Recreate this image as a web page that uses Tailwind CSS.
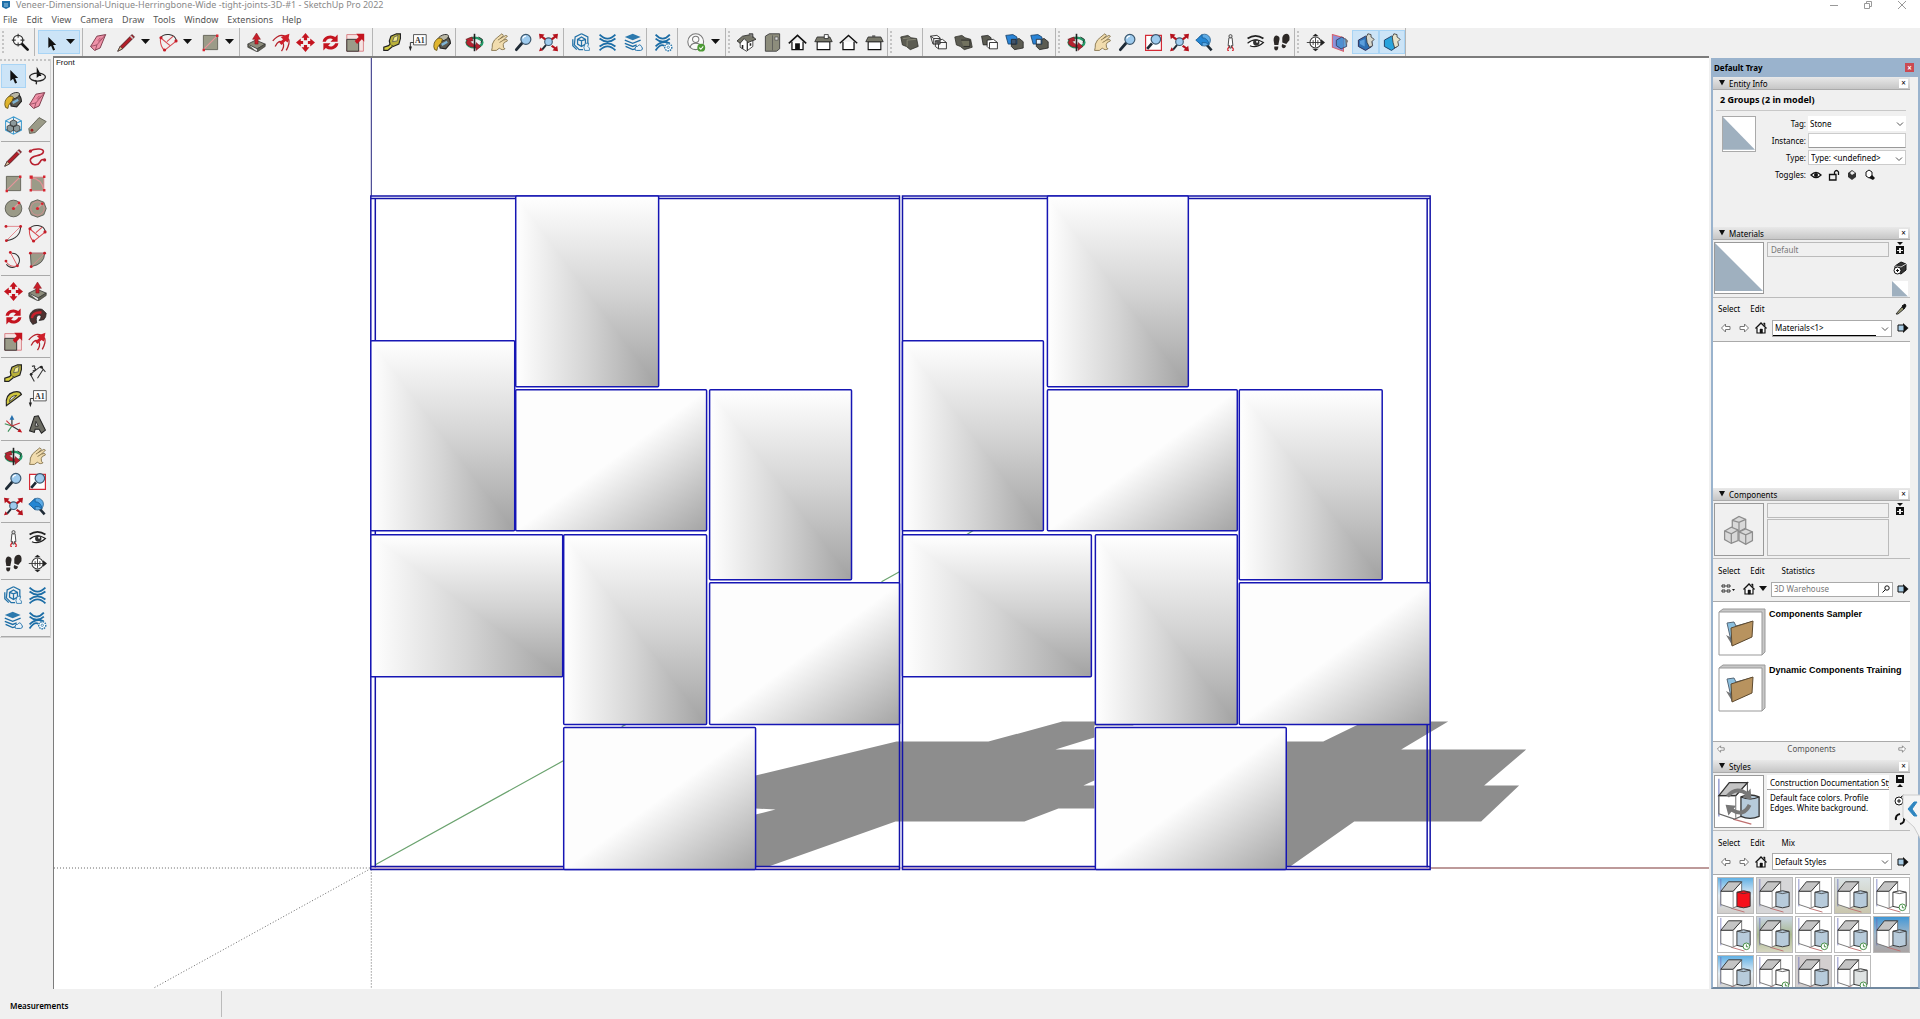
<!DOCTYPE html>
<html lang="en">
<head>
    <meta charset="UTF-8">
    <meta name="viewport" content="width=device-width, initial-scale=1.0">
    <title>Veneer-Dimensional-Unique-Herringbone-Wide - SketchUp Pro 2022</title>
    <script src="https://cdn.jsdelivr.net/npm/@tailwindcss/browser@4"></script>
</head>
<body class="h-screen flex flex-col overflow-hidden bg-[#f0f0f0] font-['Noto_Sans',sans-serif] text-[9px] leading-3 text-black">

<!-- Face shading -->
<svg class="absolute h-0 w-0" xmlns="http://www.w3.org/2000/svg">
    <linearGradient id="gv" x1="0" y1="0" x2="0" y2="1"><stop offset="0" stop-color="#fff"/><stop offset="0.5" stop-color="#d4d4d4"/><stop offset="1" stop-color="#a2a2a2"/></linearGradient>
    <linearGradient id="gh" x1="0" y1="0" x2="1" y2="0"><stop offset="0" stop-color="#fff"/><stop offset="0.5" stop-color="#d4d4d4"/><stop offset="1" stop-color="#a2a2a2"/></linearGradient>
    <linearGradient id="gd" x1="0.5" y1="0.5" x2="1" y2="1"><stop offset="0" stop-color="#fdfdfd"/><stop offset="1" stop-color="#a4a4a4"/></linearGradient>
    <symbol id="face-a" viewBox="0 0 100 100" preserveAspectRatio="none"><path d="M0 0H100V100H0z" fill="url(#gv)"/><path d="M0 0L100 100H0z" fill="url(#gh)"/></symbol>
    <symbol id="face-b" viewBox="0 0 100 100" preserveAspectRatio="none"><path d="M0 0H100V100H0z" fill="url(#gd)"/></symbol>
</svg>

<!-- Icon sprite -->
<svg class="hidden" xmlns="http://www.w3.org/2000/svg">
    <symbol id="zoom" viewBox="0 0 24 24"><path d="M13 13L21 21" stroke="#151515" stroke-width="3.4" stroke-linecap="round"/><circle cx="9" cy="9" r="6" fill="#f8f8f8" stroke="#333" stroke-width="1.6"/><path d="M9 1v5M9 12v5M1 9h5M12 9h5" stroke="#333" stroke-width="1.3"/></symbol>
    <symbol id="select" viewBox="0 0 24 24"><path d="M8 5V19L11.500 16L14 22L16.500 21L14 15H18z" fill="#111"/></symbol>
    <symbol id="lasso" viewBox="0 0 24 24"><path d="M11 1V15L14 12.500H17z" fill="#111"/><ellipse cx="12" cy="14" rx="10" ry="5" fill="none" stroke="#222" stroke-width="1.6"/><path d="M9 18q3 3 1 5" fill="none" stroke="#222" stroke-width="1.5"/></symbol>
    <symbol id="eraser" viewBox="0 0 24 24"><path d="M2 17L10 4L21 2L14 19L7 22z" fill="#ef92a8" stroke="#7b3a4a" stroke-width="1.2"/><path d="M2 17L10 15L21 2M10 15L8 22" fill="none" stroke="#8d4558"/><path d="M11 10l3-4M12 11l4-5" stroke="#b85470"/></symbol>
    <symbol id="pencil" viewBox="0 0 24 24"><path d="M1 23L4 17L19 2L22 5L7 20z" fill="#b21e28" stroke="#3a1215"/><path d="M1 23L4 17L7 20z" fill="#e8c79a" stroke="#333" stroke-width=".8"/><path d="M17 4L20 7" stroke="#ccc" stroke-width="2"/></symbol>
    <symbol id="freehand" viewBox="0 0 24 24"><path d="M2 4C9 0 22 0 19 6C16 11 2 9 3 16C4 22 12 23 15 18Q17 13 22 15" fill="none" stroke="#b8202f" stroke-width="2"/><circle cx="3" cy="4" r="2" fill="#b8202f"/><circle cx="21" cy="15" r="2" fill="#b8202f"/></symbol>
    <symbol id="rect" viewBox="0 0 24 24"><path d="M3 3H21V21H3z" fill="#9b9b88" stroke="#55554a"/><path d="M3 21L21 3" stroke="#e8959b" stroke-width="1.3"/><path d="M2 20h3v3h-3zM19 2h3v3h-3z" fill="#d8242f"/></symbol>
    <symbol id="rotrect" viewBox="0 0 24 24"><path d="M4 4H20V21H4z" fill="#9b9b88" stroke="#d87a80"/><path d="M4 5Q17 6 20 20" fill="none" stroke="#e09095" stroke-width="1.500"/><path d="M2 2h4v4h-4zM19 2h3v3h-3zM2 19h3v3h-3zM19 19h3v3h-3z" fill="#d8242f"/></symbol>
    <symbol id="circle" viewBox="0 0 24 24"><circle cx="12" cy="12" r="10.500" fill="#9b9b88" stroke="#4c4c44"/><path d="M12 12L19 5" stroke="#e8959b" stroke-width="1.5"/><circle cx="12" cy="12" r="2" fill="#d8242f"/><circle cx="19" cy="5" r="1.700" fill="#d8242f"/></symbol>
    <symbol id="polygon" viewBox="0 0 24 24"><path d="M12 1L20 4L23 12L20 20L12 23L4 20L1 12L4 4z" fill="#9b9b88" stroke="#4c4c44"/><circle cx="12" cy="12" r="8.500" fill="none" stroke="#dc8a8f"/><path d="M12 12L18 6" stroke="#e8959b" stroke-width="1.5"/><circle cx="12" cy="12" r="2" fill="#d8242f"/><circle cx="18" cy="6" r="1.7" fill="#d8242f"/></symbol>
    <symbol id="arc" viewBox="0 0 24 24"><path d="M2 6C6 0 20 0 22 10" fill="none" stroke="#333" stroke-width="1.300"/><path d="M2 6C1 13 3 18 7 22L22 10M2 6L14 16M10 11L18 4" fill="none" stroke="#d8484f" stroke-width="1.3"/><circle cx="2.500" cy="6" r="2" fill="#c61d28"/><circle cx="7" cy="21.500" r="2" fill="#c61d28"/><circle cx="21.500" cy="10" r="2" fill="#c61d28"/></symbol>
    <symbol id="arc2" viewBox="0 0 24 24"><path d="M2 3H21L3 21" fill="none" stroke="#e0868b" stroke-width="1.2"/><path d="M21 3Q21 18 3 21" fill="none" stroke="#333" stroke-width="1.3"/><circle cx="2.5" cy="3" r="1.8" fill="#c61d28"/><circle cx="21" cy="3" r="1.8" fill="#c61d28"/><circle cx="3" cy="21" r="1.8" fill="#c61d28"/></symbol>
    <symbol id="arc3" viewBox="0 0 24 24"><path d="M10 4A9 9 0 1 1 3 18" fill="none" stroke="#333" stroke-width="1.3"/><path d="M8 3L17 20M17 20Q8 23 2 14" fill="none" stroke="#d8585f" stroke-width="1.2"/><circle cx="8" cy="3" r="1.8" fill="#c61d28"/><circle cx="2.500" cy="14" r="1.8" fill="#c61d28"/><circle cx="17" cy="20" r="1.8" fill="#c61d28"/></symbol>
    <symbol id="pie" viewBox="0 0 24 24"><path d="M3 4H21Q21 18 4 21z" fill="#9b9b88" stroke="#444"/><path d="M3 4H21L4 21" fill="none" stroke="#e08a8f"/><circle cx="3" cy="4" r="1.8" fill="#c61d28"/><circle cx="21" cy="4" r="1.8" fill="#c61d28"/><circle cx="4" cy="21" r="1.8" fill="#c61d28"/></symbol>
    <symbol id="pushpull" viewBox="0 0 24 24"><path d="M1 14L11 9L23 14L13 20z" fill="#8d8d7c" stroke="#333"/><path d="M1 14V18L13 24V20L23 14V17L13 24" fill="#5f5f52" stroke="#333" stroke-width=".8"/><path d="M12 0L17 8H14V14H10V8H7z" fill="#c9202b" stroke="#7a0f16" stroke-width=".6"/></symbol>
    <symbol id="offset" viewBox="0 0 24 24"><path d="M1 10Q12-3 21 8Q23 13 18 22" fill="none" stroke="#b52029" stroke-width="1.700"/><path d="M4 17Q9 7 14 13Q16 17 12 23" fill="none" stroke="#b52029" stroke-width="1.600"/><path d="M22 1L20 12L17 10L12 15L9 12L14 8L11 5z" fill="#cf1f2a"/></symbol>
    <symbol id="move" viewBox="0 0 24 24"><path d="M12 0L17 6H14V9H10V6H7zM12 24L17 18H14V15H10V18H7zM0 12L6 7V10H9V14H6V17zM24 12L18 7V10H15V14H18V17z" fill="#c4141f"/></symbol>
    <symbol id="rotate" viewBox="0 0 24 24"><path d="M2 11A10 9 0 0 1 18 5L21 2V11H12L15 8A6 6 0 0 0 6 11z" fill="#c4141f"/><path d="M22 13A10 9 0 0 1 6 19L3 22V13H12L9 16A6 6 0 0 0 18 13z" fill="#c4141f"/></symbol>
    <symbol id="scale" viewBox="0 0 24 24"><path d="M1 2H22V23H1z" fill="#f6e3e2" stroke="#d36a70"/><path d="M1 8H16V23H1z" fill="#9b9b88" stroke="#333" stroke-width="1.2"/><path d="M23 1V11L20 8L14 14L11 10L16 5L13 1z" fill="#c4141f"/></symbol>
    <symbol id="followme" viewBox="0 0 24 24"><path d="M2 13C2 5 10 1 18 3L23 8Q23 13 20 16L14 17Q19 11 14 10Q9 11 11 20L6 22Q2 18 2 13z" fill="#4d3331" stroke="#222"/><path d="M5 14Q6 6 17 7" fill="none" stroke="#c9202b" stroke-width="3"/></symbol>
    <symbol id="tape" viewBox="0 0 24 24"><path d="M8 10L10 4L17 1H22V7L20 14L13 17L9 15z" fill="#b9b13a" stroke="#222" stroke-width="1.500"/><path d="M12 11L14 5L19 3L18 10z" fill="#f1eb8e" stroke="#555"/><path d="M9 14L7 16L1 18V22H6L12 17" fill="#d7cf40" stroke="#222" stroke-width="1.500"/></symbol>
    <symbol id="dimension" viewBox="0 0 24 24"><path d="M3 13L16 3M16 3L22 10M3 13L8 22M19 7L12 18" fill="none" stroke="#333" stroke-width="1.300"/><path d="M5 3q5-2 3 2q4 2-2 4" fill="none" stroke="#333" stroke-width="1.400"/><circle cx="17" cy="4" r="1.700" fill="#222"/><circle cx="4" cy="13" r="1.700" fill="#222"/></symbol>
    <symbol id="protractor" viewBox="0 0 24 24"><path d="M3 21Q1 7 12 4Q20 2 22 7z" fill="#cfc640" stroke="#222" stroke-width="1.500"/><path d="M7 16Q7 9 16 8z" fill="#eee" stroke="#222"/></symbol>
    <symbol id="text" viewBox="0 0 24 24"><path d="M7 2H23V15H7z" fill="#fff" stroke="#333"/><path d="M7 12H3V18" fill="none" stroke="#333" stroke-width="1.200"/><path d="M1 17H5L3 23z" fill="#222"/><text x="15" y="12" font-size="10" font-weight="700" font-family="Liberation Serif, serif" text-anchor="middle" fill="#333">A1</text></symbol>
    <symbol id="axes" viewBox="0 0 24 24"><path d="M10 14V3M10 14L20 20" stroke="#333" stroke-width="1.500"/><path d="M10 0L13 6H7z" fill="#246fae"/><path d="M1 11L10 14L5 21" fill="none" stroke="#3b8e58" stroke-width="1.400"/><path d="M10 14L20 10M3 7L10 14" fill="none" stroke="#c8323a" stroke-width="1.400"/><path d="M23 22L17 21L20 17z" fill="#c4141f"/></symbol>
    <symbol id="text3d" viewBox="0 0 24 24"><path d="M8 2L13 1L22 19L17 23L14 18H9L8 22L2 20z" fill="#6d6d64" stroke="#222" stroke-width="1.300"/><path d="M10 8L13 14H9z" fill="#ddd" stroke="#222"/></symbol>
    <symbol id="paint" viewBox="0 0 24 24"><path d="M7 8L16 3Q22 6 22 13L16 20L9 19z" fill="#5d5b52" stroke="#222" stroke-width="1.500"/><ellipse cx="13" cy="6" rx="7" ry="3.500" transform="rotate(-22 13 6)" fill="#b9b7a6" stroke="#222"/><path d="M3 10Q7 4 12 8Q11 13 8 15Q5 18 5 22Q1 22 1 17Q1 12 3 10z" fill="#dfb52e" stroke="#5b4a12"/><path d="M11 15L18 11" stroke="#7fb5d5" stroke-width="3"/></symbol>
    <symbol id="make" viewBox="0 0 24 24"><path d="M12 1L22 6V18L12 23L2 18V6zM2 6L12 11L22 6M12 11V23M2 18L12 12L22 18M12 1V11" fill="none" stroke="#3f9bcf" stroke-width="1.300"/><path d="M8 7l4-2 4 2v5l-4 2-4-2zM4 13l4-2 4 2v5l-4 2-4-2zM12 13l4-2 4 2v5l-4 2-4-2z" fill="#8d9a9c" stroke="#333"/></symbol>
    <symbol id="tag" viewBox="0 0 24 24"><path d="M2 22L1 16L14 2L23 7L9 21z" fill="#9b9b88" stroke="#55554a"/><circle cx="5" cy="18" r="1.800" fill="#922"/></symbol>
    <symbol id="orbit" viewBox="0 0 24 24"><ellipse cx="12" cy="12" rx="10" ry="6" fill="none" stroke="#249a68" stroke-width="3"/><path d="M12 18A10 6 0 0 1 3 9L1 8L9 5L10 10L7 10Q8 14 14 15V12L20 17L14 22V18z" fill="#b42330" stroke="#6a1119" stroke-width=".6"/><path d="M12 1V23" stroke="#222" stroke-width="2"/><path d="M17 5L22 8L20 13" fill="none" stroke="#222"/></symbol>
    <symbol id="pan" viewBox="0 0 24 24"><path d="M2 22Q3 19 3 14Q5 8 10 5L15 1L17 3L13 7L20 3L22 4L17 9L21 8L22 10L18 12Q16 14 17 18L19 20L16 21Q13 21 12 19L8 22z" fill="#f1dcae" stroke="#75633a" stroke-width="1"/><path d="M10 9L13 7M12 12L17 9" stroke="#75633a"/></symbol>
    <symbol id="lens" viewBox="0 0 24 24"><path d="M10 13L3 21" stroke="#1f2b36" stroke-width="3.600" stroke-linecap="round"/><circle cx="15" cy="8" r="6.300" fill="#9ecbee" stroke="#3d586e" stroke-width="1.500"/><path d="M11 7Q12 4 15 4" stroke="#fff" stroke-width="1.500" fill="none"/></symbol>
    <symbol id="zoomwin" viewBox="0 0 24 24"><path d="M2 3H22V22H2z" fill="#fff" stroke="#d32a35" stroke-width="1.500"/><path d="M10 13L4 20" stroke="#1f2b36" stroke-width="3.400"/><circle cx="15" cy="8" r="6" fill="#9ecbee" stroke="#3d586e" stroke-width="1.500"/></symbol>
    <symbol id="zoomext" viewBox="0 0 24 24"><path d="M9 15L4 21" stroke="#1f2b36" stroke-width="2.500"/><circle cx="12" cy="11" r="4.800" fill="#9ecbee" stroke="#3d586e" stroke-width="1.400"/><path d="M0 1L7 2L5 4L9 7L7 9L3 6L1 8zM24 1L17 2L19 4L15 7L17 9L21 6L23 8zM24 23L17 22L19 20L15 17L17 15L21 18L23 16zM0 23L5 22L2 18z" fill="#b5121d"/></symbol>
    <symbol id="previous" viewBox="0 0 24 24"><path d="M14 14L21 22" stroke="#1f2b36" stroke-width="3.200"/><circle cx="12" cy="9" r="7.500" fill="#5cabe6" stroke="#28608e"/><path d="M1 9L9 2V6Q16 6 18 15Q14 11 9 12V16z" fill="#2486d3" stroke="#175a92"/></symbol>
    <symbol id="camera" viewBox="0 0 24 24"><path d="M8 21L12 14L16 21" fill="none" stroke="#d8242f" stroke-width="1.500"/><path d="M8 22h2M14 22h2" stroke="#d8242f" stroke-width="1.500"/><path d="M10 6H14L15 16H13V19H11V16H9z" fill="#fff" stroke="#333" stroke-width="1.100"/><circle cx="12" cy="4" r="2" fill="#ddd" stroke="#333"/></symbol>
    <symbol id="look" viewBox="0 0 24 24"><path d="M2 7Q12 0 22 7" fill="none" stroke="#222" stroke-width="2.200"/><path d="M2 13Q11 5 22 12Q13 20 5 16" fill="#fff" stroke="#222" stroke-width="1.500"/><circle cx="13" cy="12" r="4" fill="#333"/><circle cx="14" cy="11" r="1.200" fill="#fff"/></symbol>
    <symbol id="walk" viewBox="0 0 24 24"><path d="M2 9Q2 3 6 3Q11 4 9 10L8 15H3zM3 17H8Q8 22 5 22Q2 21 3 17zM13 6Q14 1 19 1Q23 2 22 9L18 14L13 12zM13 14L18 16Q16 20 14 19Q11 18 13 14z" fill="#2c2826"/></symbol>
    <symbol id="section" viewBox="0 0 24 24"><circle cx="12" cy="12" r="7" fill="#fff" stroke="#333" stroke-width="1.300"/><path d="M1 12H20M12 6V18M9 9V15M15 9V15" stroke="#333" stroke-width="1.100"/><path d="M19 8L24 12L19 16zM8 4L12 1L16 4zM8 20L12 23L16 20z" fill="#222"/></symbol>
    <symbol id="wh" viewBox="0 0 24 24"><path d="M12 1L20 5V15M12 1L4 5L3 15L9 21L14 21M12 5L17 8V14L12 17L7 14V8zM7 8L12 10L17 8M12 10V17M1 8V16L6 21" fill="none" stroke="#2272a8" stroke-width="1.600"/><path d="M17 13H21L20 17L22 19V22H16L15 18z" fill="#e7f2f9" stroke="#2272a8"/></symbol>
    <symbol id="ext" viewBox="0 0 24 24"><path d="M2 2Q12 12 22 2M2 7Q12 15 22 7M2 22Q12 12 22 22M2 17Q12 9 22 17" fill="none" stroke="#1c6da6" stroke-width="2.200"/></symbol>
    <symbol id="layers" viewBox="0 0 24 24"><path d="M11 1L21 5L11 9L1 5z" fill="#2c79ad"/><path d="M1 9L11 13L21 9M1 13L11 17L16 15M2 17L11 21L14 20" fill="none" stroke="#1c6da6" stroke-width="1.700"/><path d="M14 20Q14 16 17 17Q20 13 22 17Q25 21 21 22H16Q13 22 14 20z" fill="#eaf3fa" stroke="#1c6da6" stroke-width="1.200"/></symbol>
    <symbol id="extgear" viewBox="0 0 24 24"><path d="M2 2Q11 12 20 2M2 7Q11 15 20 7M2 22Q8 13 13 16M2 17Q10 9 20 13" fill="none" stroke="#1c6da6" stroke-width="2.200"/><circle cx="18" cy="18" r="4.500" fill="#fff" stroke="#2c79ad" stroke-width="1.800" stroke-dasharray="2 1"/><circle cx="18" cy="18" r="1.500" fill="none" stroke="#2c79ad"/></symbol>
    <symbol id="account" viewBox="0 0 24 24"><circle cx="11" cy="11" r="10" fill="#fafafa" stroke="#777" stroke-width="1.300"/><circle cx="11" cy="8" r="4" fill="none" stroke="#777" stroke-width="1.300"/><path d="M4 18Q5 13 11 13Q17 13 18 18" fill="none" stroke="#777" stroke-width="1.300"/><circle cx="18" cy="18.500" r="5" fill="#4d9a35"/><path d="M15.500 18.500L17.500 20.500L20.500 17" fill="none" stroke="#fff" stroke-width="1.300"/></symbol>
    <symbol id="iso" viewBox="0 0 24 24"><path d="M4 11V18L12 23L20 17V9" fill="#fff" stroke="#222"/><path d="M0 10L7 4L17 2L24 8L14 12L9 7L4 13z" fill="#77776a" stroke="#222"/><path d="M13 11V22" stroke="#222" stroke-width="1.500"/><path d="M7 15v5M17 13v3" stroke="#222" stroke-width="2"/><path d="M15 1H20V6" fill="#888" stroke="#222"/></symbol>
    <symbol id="vtop" viewBox="0 0 24 24"><path d="M3 4L8 1H21V20L17 23H3z" fill="#8d8d7c" stroke="#444" stroke-width="1.200"/><path d="M12 3V22" stroke="#555"/><path d="M15 5H19V9H15z" fill="#ddd" stroke="#555"/></symbol>
    <symbol id="vfront" viewBox="0 0 24 24"><path d="M5 11V21H19V11" fill="#fff" stroke="#111" stroke-width="1.600"/><path d="M1 13L12 3L23 13" fill="none" stroke="#111" stroke-width="2"/><path d="M9 13H15V21H9z" fill="#111"/></symbol>
    <symbol id="vright" viewBox="0 0 24 24"><path d="M4 11H20V21H4z" fill="#fff" stroke="#111" stroke-width="1.400"/><path d="M1 11L4 5H20L23 11z" fill="#77776a" stroke="#222"/><path d="M13 2H18V7H13z" fill="#fff" stroke="#222"/></symbol>
    <symbol id="vback" viewBox="0 0 24 24"><path d="M5 11V21H19V11" fill="#fff" stroke="#111" stroke-width="1.600"/><path d="M1 13L12 3L23 13" fill="none" stroke="#111" stroke-width="1.800"/></symbol>
    <symbol id="vleft" viewBox="0 0 24 24"><path d="M4 11H20V21H4z" fill="#fff" stroke="#111" stroke-width="1.400"/><path d="M1 11L4 5H20L23 11z" fill="#77776a" stroke="#222"/><path d="M9 3H13V5H9z" fill="#555"/></symbol>
    <symbol id="solid" viewBox="0 0 24 24"><path d="M1 5L10 3L14 6L21 7L23 17L13 21L8 17L3 15z" fill="#5c5c52" stroke="#33332c"/><path d="M9 9L20 8M9 9V17M4 7L13 6" stroke="#92927f" fill="none"/></symbol>
    <symbol id="solidx" viewBox="0 0 24 24"><path d="M2 4L10 3L14 6V14H5zM8 10L17 8L22 12V20H12L8 17zM2 4L6 7H14M6 7V14M8 10L12 12H22M12 12V20" fill="#fff" fill-opacity=".6" stroke="#222" stroke-width="1.100"/><path d="M9 9H14V14H9z" fill="#555"/></symbol>
    <symbol id="solidsub" viewBox="0 0 24 24"><path d="M1 5L10 3L14 6L21 8L23 18L13 21L8 17L3 15z" fill="#5c5c52" stroke="#33332c"/><path d="M9 9H20V17H12" fill="#72725f" stroke="#222"/></symbol>
    <symbol id="solidtrim" viewBox="0 0 24 24"><path d="M2 4L10 3L14 6V15H4z" fill="#5c5c52" stroke="#222"/><path d="M9 9L17 8L22 12V20H12L9 17zM12 12H22M12 12V20" fill="#fff" stroke="#222" stroke-width="1.100"/></symbol>
    <symbol id="solidcut" viewBox="0 0 24 24"><path d="M8 9L18 7L23 11V19L12 21L8 17z" fill="#5c5c52" stroke="#222"/><path d="M1 3L10 2L15 5V14H4z" fill="#2a84d6" stroke="#123a62"/><path d="M8 8H14V14H8z" fill="#3f536b" stroke="#222"/></symbol>
    <symbol id="solidsplit" viewBox="0 0 24 24"><path d="M8 9L18 7L23 11V19L12 21L8 17z" fill="#5c5c52" stroke="#222"/><path d="M1 3L10 2L15 5V14H4z" fill="#2a84d6" stroke="#123a62"/><path d="M8 8H14V14H8z" fill="#e8f1fa" stroke="#222"/></symbol>
    <symbol id="splane" viewBox="0 0 24 24"><path d="M3 2L17 6V23L3 18z" fill="#8d93d8" stroke="#d8606c" stroke-width="1.300"/><path d="M8 9L15 5L21 9V17L14 20L8 16z" fill="#3d8fd0" fill-opacity=".8" stroke="#335"/><path d="M19 6L23 10L20 15" fill="#777"/></symbol>
    <symbol id="scut" viewBox="0 0 24 24"><path d="M3 9L12 4L20 9V17L12 22L3 17z" fill="#2e6fb2" stroke="#2b2b55" stroke-width="1.200"/><path d="M13 5L15 1L19 2V5L23 8L20 11L21 16L17 18L14 12z" fill="#d6d6cc" stroke="#333"/><path d="M5 10L11 8V17L5 14z" fill="#5b9edc"/></symbol>
    <symbol id="sfill" viewBox="0 0 24 24"><path d="M3 9L12 4L19 9V17L12 22L3 17z" fill="#28a3dc" stroke="#1d3f66" stroke-width="1.200"/><path d="M13 5L15 1L19 2V5L23 8L20 11L21 16L16 19L14 12z" fill="#e6e3cc" stroke="#333"/></symbol>

    <symbol id="swatch" viewBox="0 0 48 52" preserveAspectRatio="none"><path d="M0 0H48V52H0z" fill="#fff"/><path d="M0 0L48 50H0z" fill="#9fb0bf"/></symbol>
    <symbol id="chev" viewBox="0 0 8 8"><path d="M1 2.500L4 5.500L7 2.500" fill="none" stroke="#555"/></symbol>
    <symbol id="house" viewBox="0 0 12 12"><path d="M2 6V11H10V6" fill="#fff" stroke="#111" stroke-width="1.200"/><path d="M0.500 6.500L6 1L11.500 6.500" fill="none" stroke="#111" stroke-width="1.400"/><path d="M5 7H7.500V11H5zM8.500 1H10V4z" fill="#111" stroke="#111" stroke-width=".5"/></symbol>
    <symbol id="back" viewBox="0 0 10 10"><path d="M0.500 5L4.500 1V3.500H9V6.500H4.500V9z" fill="#fff" stroke="#777"/></symbol>
    <symbol id="fwd" viewBox="0 0 10 10"><path d="M9.500 5L5.500 1V3.500H1V6.500H5.500V9z" fill="#fff" stroke="#777"/></symbol>
    <symbol id="detail" viewBox="0 0 12 12"><path d="M6 1L11.500 6L6 11z" fill="#111"/><path d="M1 3H7V9H1z" fill="#a9cde6" stroke="#111"/></symbol>
    <symbol id="pane" viewBox="0 0 10 12"><path d="M2 0H8L5 3zM1 4H9V12H1z" fill="#111"/><path d="M4 6h2v2h2v1h-2v2h-2v-2h-2v-1h2z" fill="#eee"/></symbol>
    <symbol id="scene" viewBox="0 0 37 37"><path d="M3 1V30" stroke="#6a70b8" stroke-width=".8"/><path d="M14 32L28 36" stroke="#c07070"/><path d="M3 14L16 14L25 4V28L15 32L3 28z" fill="#fff" stroke="#666" stroke-width=".9"/><path d="M3 14L11 4H25L16 14z" fill="#c4c4c4" stroke="#333"/><path d="M16 14V31" stroke="#777" stroke-width=".8"/><path d="M20 15Q27 12 34 15V30Q27 33 20 30z" fill="currentColor" stroke="#333"/><path d="M20 15Q27 18 34 15" fill="none" stroke="#333" stroke-width=".8"/></symbol>
    <symbol id="folder" viewBox="0 0 48 48"><path d="M1 4L5 1H47V44L44 47" fill="#c8c8c8" stroke="#999"/><path d="M1 4H44V47H1z" fill="#fff" stroke="#999"/><path d="M8 27L14 37V30z" fill="#777"/><path d="M9 15L16 14L18 18L33 14L31 30L14 37z" fill="#8bc0df" stroke="#567"/><path d="M13 20L35 13L34 29L14 38z" fill="#b8935f" stroke="#5e4a2f"/></symbol>
</svg>

<header class="shrink-0 bg-white">
    <div class="flex h-[10px] items-center text-[#8a8a8a]">
        <svg class="ml-[2px] mr-[6px] h-2 w-2" viewBox="0 0 8 8"><path d="M0 0H8V6L4 8L0 6z" fill="#1d6fa8"/><path d="M2 3H6M2 5H6" stroke="#9cc8e4"/></svg>
        <h1 class="flex-1 leading-[10px]">Veneer-Dimensional-Unique-Herringbone-Wide -tight-joints-3D-#1 - SketchUp Pro 2022</h1>
        <div class="mr-[14px] flex gap-[26px]">
            <button aria-label="Minimize"><svg class="h-2 w-2" viewBox="0 0 8 8"><path d="M0 4.500H8" stroke="#999"/></svg></button>
            <button aria-label="Restore"><svg class="h-2 w-2" viewBox="0 0 8 8"><path d="M.5 2.500H5.500V7.500H.5zM2.500 2V.5H7.500V5.500H6" fill="none" stroke="#999"/></svg></button>
            <button aria-label="Close"><svg class="h-2 w-2" viewBox="0 0 8 8"><path d="M0 0L8 8M8 0L0 8" stroke="#999"/></svg></button>
        </div>
    </div>
    <nav class="flex h-[18px] items-center gap-[9px] pt-[2px] pl-[3px] text-[#555]">
        <a href="#">File</a><a href="#">Edit</a><a href="#">View</a><a href="#">Camera</a><a href="#">Draw</a><a href="#">Tools</a><a href="#">Window</a><a href="#">Extensions</a><a href="#">Help</a>
    </nav>
    <div id="topbar" class="flex h-7 bg-[#f0f0f0]"></div>
</header>

<main class="flex min-h-0 flex-1">
    <aside class="w-[53px] shrink-0 pt-[2px]">
        <div id="sidebar" class="w-[51px] border-r border-b border-[#d0d0d0]"></div>
    </aside>

    <!-- Model viewport -->
    <section class="min-w-0 flex-1 border-t-2 border-l border-[#7c7c7c] bg-white">
        <svg class="h-full w-full" viewBox="54 58 1656 931" preserveAspectRatio="xMinYMin meet">
            <text x="56" y="65" font-size="8" font-family="Liberation Sans, sans-serif" fill="#111">Front</text>
            <path d="M371.500 58V196" stroke="#23237c"/>
            <path d="M54 868.500H371M371.500 870V989M371 869L153 989" stroke="#666" stroke-dasharray="1 2" fill="none"/>
            <path d="M1431 868.500H1710" stroke="#7a3535"/>
            <path d="M372 868.500H1431" stroke="#c58aa5"/>
            <g fill="#8d8d8d">
                <path d="M756 776L897 742H989L1063 722H1134V726H1095V738L1056 750H1095V781L1084 786H1095V809H1059L1025 822H896L769 867H756V815L776 810L756 809z"/>
                <path d="M1287 742H1324L1359 725L1431 722H1449L1402 750H1527L1485 786H1520L1482 822H1355L1291 867H1287z"/>
            </g>
            <path d="M376 865L564 761M882 582L900 572M967 535L975 530M622 727L626 725" stroke="#6ba36f" stroke-width="1.200"/>
            <g fill="none" stroke="#1414a8" stroke-width="1.500">
                <path d="M371 196H900V870H371zM375.500 198V868M371 198.500H900M371 867H900"/>
                <path d="M903 196H1431V870H903zM1428 198V868M903 198.500H1431M903 867H1431"/>
            </g>
            <g id="faces" stroke="#1616b4" stroke-width="1.500" fill="none"></g>
        </svg>
    </section>

    <!-- Default tray -->
    <aside class="relative mt-[2px] ml-[2px] flex w-[209px] shrink-0 flex-col border-r-2 border-b-2 border-l-2 border-[#9ab3cd] border-b-[#70889f]">
        <div class="flex h-[19px] shrink-0 items-center bg-[#9ab3cd] pr-1 pl-[1px] font-bold">
            <h2 class="flex-1 text-[8px]">Default Tray</h2>
            <button aria-label="Close tray" class="flex h-[9px] w-[9px] items-center justify-center bg-[#cb4a52] text-[8px] leading-[8px] text-white">×</button>
        </div>
        <div class="min-h-0 flex-1 overflow-hidden pr-2 text-[8px]">
            <section class="h-[150px]">
                <div data-head="Entity Info"></div>
                <p class="mr-1 ml-[3px] flex h-[21px] items-center border-b border-[#c8c8c8] pl-1 text-[9px] font-bold">2 Groups (2 in model)</p>
                <div class="mt-[5px] flex pr-1">
                    <svg class="ml-[9px] h-9 w-[34px] border border-[#aaa]"><use href="#swatch"/></svg>
                    <div class="ml-auto grid grid-cols-[auto_98px] items-center gap-x-[2px] gap-y-[2px] text-right">
                        <label for="tag">Tag:</label>
                        <div class="relative h-[15px] bg-white"><select id="tag" class="h-full w-full appearance-none pl-[2px]"><option>Stone</option></select><svg class="pointer-events-none absolute top-1 right-[2px] h-2 w-2"><use href="#chev"/></svg></div>
                        <label for="instance">Instance:</label>
                        <input id="instance" class="h-[15px] w-full border border-[#ccc] border-b-[#999] bg-white pl-[2px]">
                        <label for="type">Type:</label>
                        <div class="relative h-[15px] border border-[#ccc] bg-white"><select id="type" class="h-full w-full appearance-none pl-[2px]"><option>Type: &lt;undefined&gt;</option></select><svg class="pointer-events-none absolute top-1 right-[2px] h-2 w-2"><use href="#chev"/></svg></div>
                        <span>Toggles:</span>
                        <div class="flex h-4 items-center gap-[6px] pl-[2px]">
                            <button aria-label="Hide"><svg class="h-3 w-3" viewBox="0 0 12 12"><path d="M1 6Q6 1 11 6Q6 11 1 6z" fill="#fff" stroke="#111" stroke-width="1.300"/><circle cx="6" cy="6" r="2" fill="#111"/></svg></button>
                            <button aria-label="Lock"><svg class="h-3 w-3" viewBox="0 0 12 12"><path d="M1.500 5.500H8V11H1.500zM6.500 5V3Q8.500 0 10.500 3V6" fill="none" stroke="#111" stroke-width="1.300"/></svg></button>
                            <button aria-label="Receive shadows"><svg class="h-3 w-3" viewBox="0 0 12 12"><path d="M2 4L6 1L10 4V8L6 11L2 8z" fill="#333"/><path d="M6 2L9 4L6 6L4 4z" fill="#eee"/></svg></button>
                            <button aria-label="Cast shadows"><svg class="h-3 w-3" viewBox="0 0 12 12"><path d="M2 3L5 1L8 3V7L5 9L2 7z" fill="#fff" stroke="#111"/><path d="M5 9L8 6L11 9L9 11z" fill="#111"/></svg></button>
                        </div>
                    </div>
                </div>
            </section>

            <section class="h-[261px]">
                <div data-head="Materials"></div>
                <div class="mt-[2px] flex h-[56px] border-b border-[#bbb]">
                    <svg class="ml-[1px] h-[52px] w-[50px] border border-[#999]"><use href="#swatch"/></svg>
                    <input aria-label="Material name" value="Default" class="ml-[3px] h-[15px] w-[122px] border border-[#bbb] pl-[3px] text-[#777]">
                    <div class="ml-auto flex w-5 flex-col items-center justify-between">
                        <button aria-label="Secondary pane"><svg class="h-3 w-[10px]"><use href="#pane"/></svg></button>
                        <button aria-label="Create material"><svg class="h-[14px] w-[14px]" viewBox="0 0 14 14"><path d="M2 5L8 1L13 3V9L8 13L2 11z" fill="#333" stroke="#111"/><path d="M2 5L8 6L13 3" stroke="#ccc" fill="none"/><circle cx="4.500" cy="9.500" r="3.500" fill="#fff" stroke="#111"/><path d="M4.500 8v3M3 9.500h3" stroke="#111"/></svg></button>
                        <svg class="h-4 w-4"><use href="#swatch"/></svg>
                    </div>
                </div>
                <div class="flex h-[17px] items-end gap-[10px] pl-[5px]">
                    <button>Select</button><button>Edit</button>
                    <button aria-label="Sample paint" class="mr-[3px] ml-auto"><svg class="h-3 w-3" viewBox="0 0 12 12"><path d="M1 11L7 4L9 6L3 11z" fill="#9a9a70" stroke="#333"/><path d="M7 3L10 1L11 3L9 6z" fill="#111" stroke="#111"/></svg></button>
                </div>
                <div class="flex h-[27px] items-center border-b border-[#aaa] pl-2">
                    <button aria-label="Back"><svg class="h-[10px] w-[10px]"><use href="#back"/></svg></button>
                    <button aria-label="Forward" class="ml-2"><svg class="h-[10px] w-[10px]"><use href="#fwd"/></svg></button>
                    <button aria-label="In model" class="ml-[6px]"><svg class="h-3 w-3"><use href="#house"/></svg></button>
                    <div class="relative ml-[5px] h-[17px] w-[120px] border border-[#aaa] bg-white"><select aria-label="Material library" class="h-full w-[103px] appearance-none border-b border-black pl-[2px]"><option>Materials&lt;1&gt;</option></select><svg class="pointer-events-none absolute top-1 right-[2px] h-2 w-2"><use href="#chev"/></svg></div>
                    <button aria-label="Details" class="ml-[5px]"><svg class="h-3 w-3"><use href="#detail"/></svg></button>
                </div>
                <div class="h-[146px] bg-white"></div>
            </section>

            <section class="h-[272px]">
                <div data-head="Components"></div>
                <div class="mt-[2px] flex h-[56px] border-b border-[#bbb]">
                    <svg class="ml-[1px] h-[53px] w-[50px] border border-[#999]" viewBox="0 0 50 53"><g fill="#d9d9d9" stroke="#8d8d8d" stroke-width="1.300"><path d="M18 17L25 13L32 16V25L25 29L18 25z"/><path d="M10 28L17 24L24 27V38L17 41L10 37z"/><path d="M25 29L32 26L39 29V38L32 42L25 38z"/><path d="M18 17L25 19L32 16M25 19V28M10 28L17 31L24 27M17 31V41M25 29L32 32L39 29M32 32V42" fill="none"/></g></svg>
                    <div class="ml-[3px] flex w-[122px] flex-col gap-[1px]">
                        <input aria-label="Component name" class="h-[15px] border border-[#bbb]">
                        <textarea aria-label="Component description" class="h-[37px] resize-none border border-[#bbb]"></textarea>
                    </div>
                    <div class="ml-auto flex w-5 justify-center"><button aria-label="Secondary pane" class="self-start"><svg class="h-3 w-[10px]"><use href="#pane"/></svg></button></div>
                </div>
                <div class="flex h-[18px] items-end pl-[5px]"><button>Select</button><button class="ml-[10px]">Edit</button><button class="ml-[17px]">Statistics</button></div>
                <div class="flex h-[25px] items-center border-b border-[#aaa] pl-2">
                    <button aria-label="View options"><svg class="h-3 w-[14px]" viewBox="0 0 14 12"><path d="M1 2h3v2h-3zM6 2h3v2h-3zM1 7h3v2h-3zM6 7h3v2h-3z" fill="none" stroke="#333"/><path d="M11 6h3l-1.500 2z" fill="#111"/></svg></button>
                    <button aria-label="In model" class="ml-2"><svg class="h-3 w-3"><use href="#house"/></svg></button>
                    <button aria-label="Navigation" class="ml-1"><svg class="h-2 w-2" viewBox="0 0 8 8"><path d="M0 1H8L4 6z" fill="#111"/></svg></button>
                    <div class="ml-1 flex h-[15px] w-[122px] border border-[#aaa] bg-white">
                        <input aria-label="Search components" placeholder="3D Warehouse" class="min-w-0 flex-1 pl-[2px] placeholder-[#777]">
                        <button aria-label="Search" class="flex w-[14px] items-center justify-center border-l border-[#999]"><svg class="h-2 w-2" viewBox="0 0 8 8"><circle cx="5" cy="3" r="2.200" fill="none" stroke="#111"/><path d="M3.500 4.500L.5 7.500" stroke="#111"/></svg></button>
                    </div>
                    <button aria-label="Details" class="ml-1"><svg class="h-3 w-3"><use href="#detail"/></svg></button>
                </div>
                <ul class="flex h-[140px] flex-col gap-2 border-b border-[#aaa] bg-white pt-[6px] pl-[5px] font-['Liberation_Sans',sans-serif] text-[9px] font-bold">
                    <li class="flex gap-[3px]"><svg class="h-12 w-12"><use href="#folder"/></svg><span>Components Sampler</span></li>
                    <li class="flex gap-[3px]"><svg class="h-12 w-12"><use href="#folder"/></svg><span class="whitespace-nowrap">Dynamic Components Training</span></li>
                </ul>
                <div class="flex h-[14px] items-center justify-between px-1 text-[#555]">
                    <button aria-label="Previous page"><svg class="h-2 w-2" viewBox="0 0 10 10"><use href="#back"/></svg></button>Components<button aria-label="Next page"><svg class="h-2 w-2" viewBox="0 0 10 10"><use href="#fwd"/></svg></button>
                </div>
            </section>

            <section>
                <div data-head="Styles"></div>
                <div class="mt-[2px] flex h-[56px] border-b border-[#bbb]">
                    <div class="relative ml-[1px] h-[53px] w-[50px] border border-[#999] bg-white text-[#b7cbdb]">
                        <svg class="h-full w-full"><use href="#scene"/></svg>
                        <svg class="absolute inset-0 h-full w-full" viewBox="0 0 50 53"><path d="M13 21Q22 10 34 19M36 30Q30 43 17 35" fill="none" stroke="#777" stroke-width="4"/><path d="M29 22L37 13L38 25zM11 30L22 31L14 41z" fill="#777"/></svg>
                    </div>
                    <div class="ml-[3px] flex w-[122px] flex-col overflow-hidden bg-white">
                        <input aria-label="Style name" value="Construction Documentation Style" class="h-[15px] shrink-0 border-b border-[#999] pl-[3px]">
                        <p class="pt-[3px] pl-[3px] leading-[10px]">Default face colors. Profile Edges. White background.</p>
                    </div>
                    <div class="ml-auto flex w-5 flex-col items-center gap-[7px]">
                        <button aria-label="Secondary pane"><svg class="h-3 w-[10px]" viewBox="0 0 10 12"><path d="M1 0H9V8H1zM5 9L8 12H2z" fill="#111"/><path d="M3 2h4v2h-4z" fill="#eee"/></svg></button>
                        <button aria-label="Create style"><svg class="h-3 w-3" viewBox="0 0 12 12"><circle cx="5" cy="7" r="4" fill="#fff" stroke="#111"/><path d="M5 5v4M3 7h4M7 3l3-2" stroke="#111"/></svg></button>
                        <button aria-label="Update style"><svg class="h-3 w-3" viewBox="0 0 12 12"><path d="M6 1Q1 2 2 7M6 11Q11 10 10 5" fill="none" stroke="#111" stroke-width="2"/></svg></button>
                    </div>
                </div>
                <div class="flex h-[18px] items-end pl-[5px]"><button>Select</button><button class="ml-[10px]">Edit</button><button class="ml-[17px]">Mix</button></div>
                <div class="flex h-[26px] items-center border-b border-[#aaa] pl-2">
                    <button aria-label="Back"><svg class="h-[10px] w-[10px]"><use href="#back"/></svg></button>
                    <button aria-label="Forward" class="ml-2"><svg class="h-[10px] w-[10px]"><use href="#fwd"/></svg></button>
                    <button aria-label="In model" class="ml-[6px]"><svg class="h-3 w-3"><use href="#house"/></svg></button>
                    <div class="relative ml-[5px] h-[17px] w-[120px] border border-[#aaa] bg-white"><select aria-label="Style library" class="h-full w-full appearance-none pl-[2px]"><option>Default Styles</option></select><svg class="pointer-events-none absolute top-1 right-[2px] h-2 w-2"><use href="#chev"/></svg></div>
                    <button aria-label="Details" class="ml-[5px]"><svg class="h-3 w-3"><use href="#detail"/></svg></button>
                </div>
                <div id="styles" class="grid h-[118px] grid-cols-[repeat(5,37px)] content-start gap-[2px] overflow-hidden bg-white pt-[2px] pl-1"></div>
            </section>
        </div>
        <button aria-label="Expand" class="absolute top-[736px] -right-[3px]"><svg class="h-[46px] w-[19px]" viewBox="0 0 19 46"><path d="M1 1H19V46L12 33L1 23z" fill="#f4f4f4" stroke="#ccc"/><path d="M12 8L6 15L12 22H15L10 15L15 8z" fill="#2f86c0" stroke="#2f86c0"/></svg></button>
    </aside>
</main>

<footer class="flex h-[30px] shrink-0 items-center">
    <label for="measure" class="pt-1 pl-[10px] text-[8px] font-semibold">Measurements</label>
    <input id="measure" class="ml-[6px] h-[26px] w-[147px] border-r border-[#bbb] pl-1">
</footer>

<script>
    const GRIP = '<span class="ml-[2px] h-[22px] w-[6px] shrink-0 self-center border-l-2 border-dotted border-[#c4c4c4]"></span>';
    const CARET = '<svg class="h-2 w-[10px] shrink-0" viewBox="0 0 10 8"><path d="M0 1H9L4.500 6z" fill="#111"/></svg>';

    function use(id, cls) {
        return `<svg class="${cls}"><use href="#${id}"/></svg>`;
    }

    // Toolbar buttons: "*" marks a pressed button, "+" one with a drop-down caret
    function button(name) {
        const on = name.includes('*');
        const drop = name.includes('+');
        const id = name.replace(/[*+]/g, '');
        const tone = on ? 'border border-[#a8d4f5] bg-[#cce4f7]' : '';
        const size = drop ? 'w-[42px] shrink-0 gap-[5px]' : 'flex-1';
        return `<button aria-label="${id}" class="flex h-6 min-w-0 items-center justify-center ${size} ${tone}">${use(id, 'h-[19px] w-[19px] shrink-0')}${drop ? CARET : ''}</button>`;
    }

    const topGroups = [
        ['w-[34px] pr-[2px]', 1, 'zoom'],
        ['w-[48px] pl-[3px] border-l', 0, 'select*+'],
        ['w-[157px] border-l', 0, 'eraser pencil+ arc+ rect+'],
        ['w-[133px] px-1 border-l', 0, 'pushpull offset move rotate scale'],
        ['w-[83px] pl-[7px] border-l', 0, 'tape text paint'],
        ['w-[108px] pl-[6px] pr-[2px] border-l', 0, 'orbit pan lens zoomext'],
        ['w-[83px] pl-[5px] border-l', 0, 'wh ext layers'],
        ['w-[31px] pl-[2px] border-l', 0, 'extgear'],
        ['w-[48px] pl-[5px] border-l', 0, 'account+'],
        ['w-[162px] border-l', 1, 'iso vtop vfront vright vback vleft'],
        ['w-[35px] border-l', 1, 'solid'],
        ['w-[133px] px-[3px] border-l', 0, 'solidx solidsub solidtrim solidcut solidsplit'],
        ['w-[239px] border-l', 1, 'orbit pan lens zoomwin zoomext previous camera look walk'],
        ['w-[112px] border-l border-r', 1, 'section splane scut* sfill*'],
    ];
    document.getElementById('topbar').innerHTML = topGroups.map(([cls, grip, names]) =>
        `<div class="flex shrink-0 items-center border-[#b5b5b5] ${cls}">${grip ? GRIP : ''}${names.split(' ').map(button).join('')}</div>`).join('');

    const sideGroups = [
        ['h-[84px] pt-[5px]', 'select* lasso paint eraser make tag'],
        ['h-[134px]', 'pencil freehand rect rotrect circle polygon arc2 arc arc3 pie'],
        ['h-[82px]', 'move pushpull rotate followme scale offset'],
        ['h-[83px]', 'tape dimension protractor text axes text3d'],
        ['h-[82px]', 'orbit pan lens zoomwin zoomext previous'],
        ['h-[57px]', 'camera look walk section'],
        ['h-[57px]', 'wh ext layers extgear'],
    ];
    document.getElementById('sidebar').innerHTML = '<div class="mt-[1px] -mb-[3px] border-t-2 border-dotted border-[#c4c4c4]"></div>' + sideGroups.map(([cls, names]) =>
        `<div class="ml-[1px] grid grid-cols-2 items-center border-b border-[#aaa] py-[3px] ${cls}">${names.split(' ').map(button).join('')}</div>`).join('');

    // Tray section headers
    document.querySelectorAll('[data-head]').forEach((el) => {
        el.className = 'flex h-[13px] items-center border-b border-[#aaa] bg-linear-to-b from-[#e9e9e9] to-[#c6c6c6] pl-[6px]';
        el.innerHTML = `<svg class="mr-[4px] h-[6px] w-[6px]" viewBox="0 0 6 6"><path d="M0 0H6L3 5.500z" fill="#111"/></svg><h3 class="flex-1 text-[8px] leading-[11px]">${el.dataset.head}</h3>
            <button aria-label="Close ${el.dataset.head}" class="mr-[2px] flex h-[9px] w-[9px] items-center justify-center bg-white text-[8px] leading-[8px]">×</button>`;
    });

    // Veneer pieces of both panels: shading, left, top, right, bottom
    const faces = [
        ['a', 516, 196, 659, 387], ['a', 371, 341, 515, 531], ['b', 516, 390, 707, 531], ['a', 710, 390, 852, 580],
        ['a', 371, 535, 563, 677], ['a', 564, 535, 707, 725], ['b', 710, 583, 900, 725], ['b', 564, 728, 756, 870],
        ['a', 1048, 196, 1189, 387], ['a', 903, 341, 1044, 531], ['b', 1048, 390, 1238, 531], ['a', 1240, 390, 1383, 580],
        ['a', 903, 535, 1092, 677], ['a', 1096, 535, 1238, 725], ['b', 1240, 583, 1431, 725], ['b', 1096, 728, 1287, 870],
    ];
    document.getElementById('faces').innerHTML = faces.map(([kind, l, t, r, b]) =>
        `<use href="#face-${kind}" stroke="none" x="${l}" y="${t}" width="${r - l}" height="${b - t}"/><rect x="${l}" y="${t}" width="${r - l}" height="${b - t}" rx="1"/>`).join('');

    // Style thumbnails: background, cylinder colour, fast-style clock
    const sky = 'bg-linear-to-b from-[#5fb0e4] via-[#e4eef4] to-[#d0cdca]';
    const white = 'bg-white';
    const blue = 'text-[#b7cbdb]';
    const thumbs = [
        [sky, 'text-[#f5101a]', 0], ['bg-[#d6d6d8]', blue, 0], [white, blue, 0], ['bg-linear-to-b from-[#dce4e6] to-[#c9c6ae]', blue, 0], [white, 'text-white', 1],
        [white, blue, 1], ['bg-linear-to-b from-[#c9d5e4] via-[#a9b78f] to-[#d5d6c0]', blue, 0], [white, blue, 1], [white, blue, 1], ['bg-linear-to-b from-[#3f97d6] via-[#9fb7c8] to-[#a9a4a4]', blue, 0],
        [sky, blue, 0], [white, 'text-white', 1], ['bg-[#d3cfcf]', blue, 0], [white, 'text-[#dfe3e3]', 1],
    ];
    document.getElementById('styles').innerHTML = thumbs.map(([bg, tone, clock], i) =>
        `<button aria-label="Style ${i + 1}" class="h-[37px] border border-[#bbb] ${bg} ${tone}"><svg class="h-full w-full" viewBox="0 0 37 37"><use href="#scene"/>${clock ? '<circle cx="30" cy="31" r="3.500" fill="#fff" stroke="#3d8a3d"/><path d="M30 29V31.500H32" stroke="#3d8a3d" fill="none"/>' : ''}</svg></button>`).join('');
</script>
</body>
</html>
